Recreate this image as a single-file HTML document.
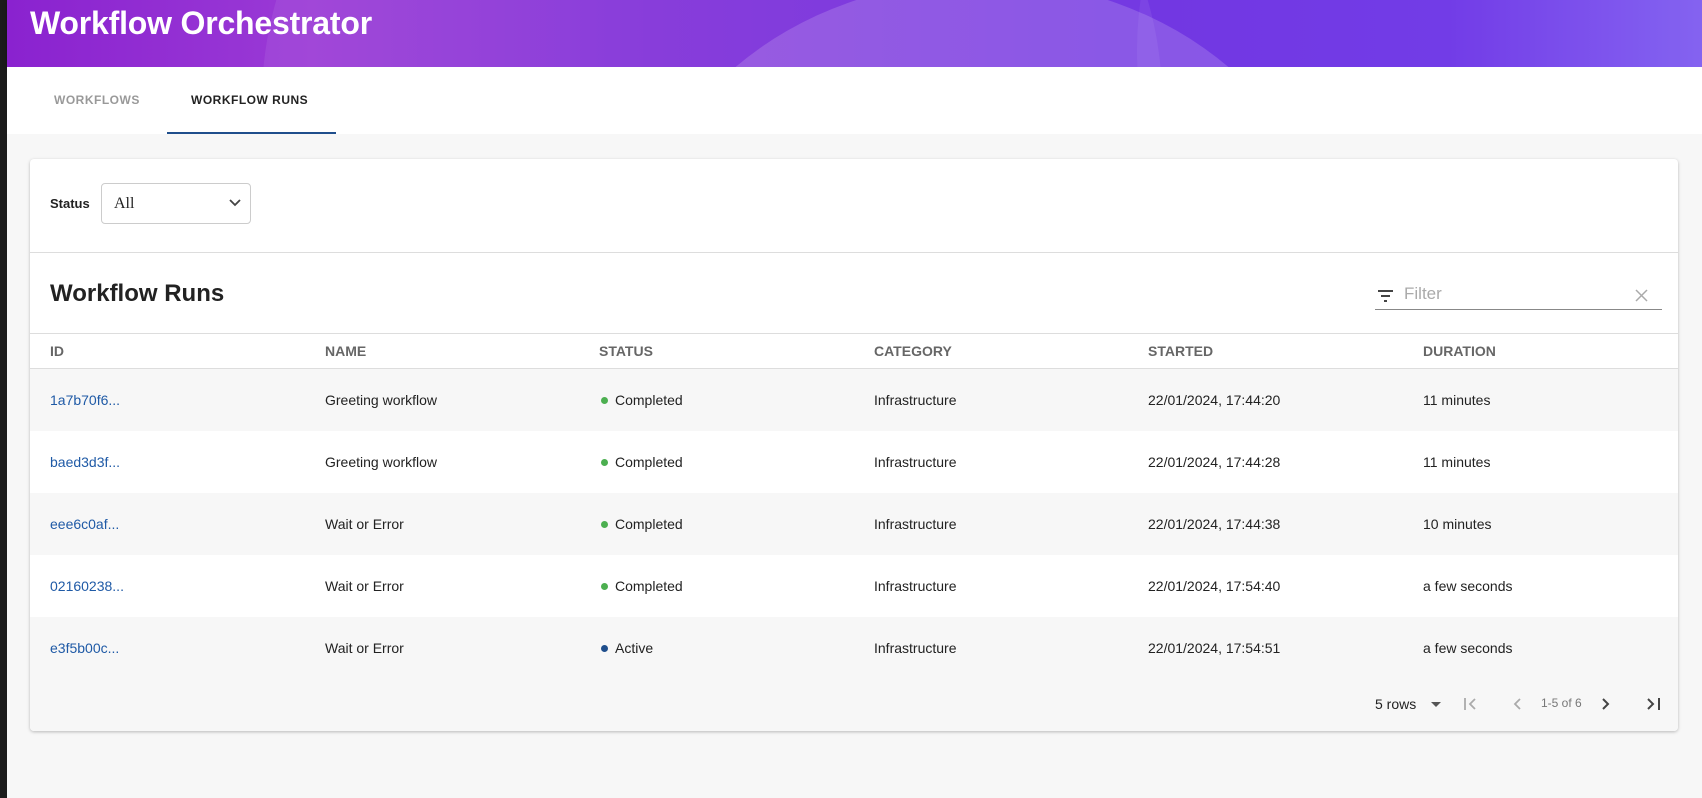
<!DOCTYPE html>
<html><head><meta charset="utf-8"><style>
*{box-sizing:border-box;margin:0;padding:0}
body{width:1702px;height:798px;overflow:hidden;background:#f7f7f7;font-family:"Liberation Sans",Arial,sans-serif;position:relative;color:#222}
.strip{position:absolute;left:0;top:0;width:7px;height:798px;background:#1b1b1b}
.hdr{position:absolute;left:7px;top:0;width:1695px;height:67px;background:linear-gradient(90deg,#8a22cf 0%,#9a3ad6 18%,#7f2fd8 38%,#6a2ae0 65%,#6a30e6 85%,#7d5af0 100%);overflow:hidden;box-shadow:0 2px 4px rgba(0,0,0,.25)}
.hdr .s1{position:absolute;left:255px;top:-300px;width:900px;height:800px;border-radius:50%;background:rgba(255,255,255,.07)}
.hdr .s2{position:absolute;left:625px;top:-20px;width:700px;height:600px;border-radius:50%;background:rgba(255,255,255,.16)}
.hdr .s3{position:absolute;left:1130px;top:-300px;width:700px;height:700px;border-radius:50%;background:rgba(255,255,255,.06)}
.hdr h1{position:absolute;left:23px;top:5px;font-size:32px;font-weight:bold;color:#fff;letter-spacing:-.2px}
.tabs{position:absolute;left:7px;top:67px;width:1695px;height:67px;background:#fff}
.tab{position:absolute;top:26px;font-size:12px;font-weight:bold;letter-spacing:.5px}
.ul{position:absolute;left:160px;top:65px;width:169px;height:2px;background:#1f4e8c}
.card{position:absolute;left:30px;top:159px;width:1648px;height:572px;background:#fff;border-radius:4px;box-shadow:0 1px 3px rgba(0,0,0,.25);overflow:hidden}
.lbl{position:absolute;left:20px;top:37px;font-size:13px;font-weight:bold}
.sel{position:absolute;left:71px;top:24px;width:150px;height:41px;border:1px solid #ccc;border-radius:4px;font-family:"Liberation Serif",serif;font-size:16px;padding:11px 12px}
.hr{position:absolute;left:0;width:100%;height:1px;background:#ddd}
.title{position:absolute;left:20px;top:121px;font-size:24px;font-weight:bold}
.filt{position:absolute;left:1345px;top:121px;width:287px;height:30px;border-bottom:1px solid #888}
.filt span{position:absolute;left:29px;top:4px;font-size:17px;color:#aaa}
.th{position:absolute;top:184px;font-size:14px;font-weight:bold;color:#666}
.row{position:absolute;left:0;width:100%;height:62px;font-size:14px}
.row div{position:absolute;top:23px}
.g{background:#f7f7f7}
.id{color:#1f5aa6}
.dot{display:inline-block;width:7px;height:7px;border-radius:50%;background:#4caf50;margin-right:7px;vertical-align:1px}
.foot{position:absolute;left:0;top:520px;width:100%;height:52px;background:#f7f7f7;font-size:14px}
.foot > *{position:absolute}
</style></head><body>
<div class="strip"></div>
<div class="hdr"><div class="s1"></div><div class="s2"></div><div class="s3"></div><h1>Workflow Orchestrator</h1></div>
<div class="tabs">
<div class="tab" style="left:47px;color:#999">WORKFLOWS</div>
<div class="tab" style="left:184px;color:#222">WORKFLOW RUNS</div>
<div class="ul"></div>
</div>
<div class="card">
<div class="lbl">Status</div>
<div class="sel">All<svg style="position:absolute;right:8px;top:14px" width="14" height="10" viewBox="0 0 14 10"><path d="M2 2l5 5 5-5" fill="none" stroke="#444" stroke-width="1.8"/></svg></div>
<div class="hr" style="top:93px"></div>
<div class="title">Workflow Runs</div>
<div class="filt"><svg style="position:absolute;left:2px;top:9px" width="18" height="14" viewBox="0 0 18 14"><path d="M1 2h15M4 7h9M7 12h3" stroke="#444" stroke-width="2"/></svg><span>Filter</span><svg style="position:absolute;right:14px;top:9px" width="13" height="13" viewBox="0 0 13 13"><path d="M1 1l11 11M12 1L1 12" stroke="#aaa" stroke-width="1.5"/></svg></div>
<div class="hr" style="top:174px"></div>
<div class="th" style="left:20px">ID</div><div class="th" style="left:295px">NAME</div><div class="th" style="left:569px">STATUS</div><div class="th" style="left:844px">CATEGORY</div><div class="th" style="left:1118px">STARTED</div><div class="th" style="left:1393px">DURATION</div>
<div class="hr" style="top:209px"></div>
<div class="row g" style="top:210px"><div class="id" style="left:20px">1a7b70f6...</div><div style="left:295px">Greeting workflow</div><div style="left:571px"><span class="dot"></span>Completed</div><div style="left:844px">Infrastructure</div><div style="left:1118px">22/01/2024, 17:44:20</div><div style="left:1393px">11 minutes</div></div>
<div class="row" style="top:272px"><div class="id" style="left:20px">baed3d3f...</div><div style="left:295px">Greeting workflow</div><div style="left:571px"><span class="dot"></span>Completed</div><div style="left:844px">Infrastructure</div><div style="left:1118px">22/01/2024, 17:44:28</div><div style="left:1393px">11 minutes</div></div>
<div class="row g" style="top:334px"><div class="id" style="left:20px">eee6c0af...</div><div style="left:295px">Wait or Error</div><div style="left:571px"><span class="dot"></span>Completed</div><div style="left:844px">Infrastructure</div><div style="left:1118px">22/01/2024, 17:44:38</div><div style="left:1393px">10 minutes</div></div>
<div class="row" style="top:396px"><div class="id" style="left:20px">02160238...</div><div style="left:295px">Wait or Error</div><div style="left:571px"><span class="dot"></span>Completed</div><div style="left:844px">Infrastructure</div><div style="left:1118px">22/01/2024, 17:54:40</div><div style="left:1393px">a few seconds</div></div>
<div class="row g" style="top:458px"><div class="id" style="left:20px">e3f5b00c...</div><div style="left:295px">Wait or Error</div><div style="left:571px"><span class="dot" style="background:#1f4e8c"></span>Active</div><div style="left:844px">Infrastructure</div><div style="left:1118px">22/01/2024, 17:54:51</div><div style="left:1393px">a few seconds</div></div>
<div class="foot">
<span style="left:1345px;top:17px">5 rows</span>
<svg style="left:1400px;top:22px" width="12" height="7" viewBox="0 0 12 7"><path d="M1 1h10L6 6z" fill="#555"/></svg>
<svg style="left:1432px;top:17px" width="16" height="16" viewBox="0 0 16 16"><path d="M3 2v12M13 3L8 8l5 5" fill="none" stroke="#aaa" stroke-width="1.8"/></svg>
<svg style="left:1481px;top:17px" width="12" height="16" viewBox="0 0 12 16"><path d="M9 3L4 8l5 5" fill="none" stroke="#aaa" stroke-width="1.8"/></svg>
<span style="left:1511px;top:17px;font-size:12px;color:#777">1-5 of 6</span>
<svg style="left:1570px;top:17px" width="12" height="16" viewBox="0 0 12 16"><path d="M3 3l5 5-5 5" fill="none" stroke="#444" stroke-width="2"/></svg>
<svg style="left:1616px;top:17px" width="16" height="16" viewBox="0 0 16 16"><path d="M2 3l5 5-5 5M13 2v12" fill="none" stroke="#444" stroke-width="2"/></svg>
</div>
</div>
</body></html>
